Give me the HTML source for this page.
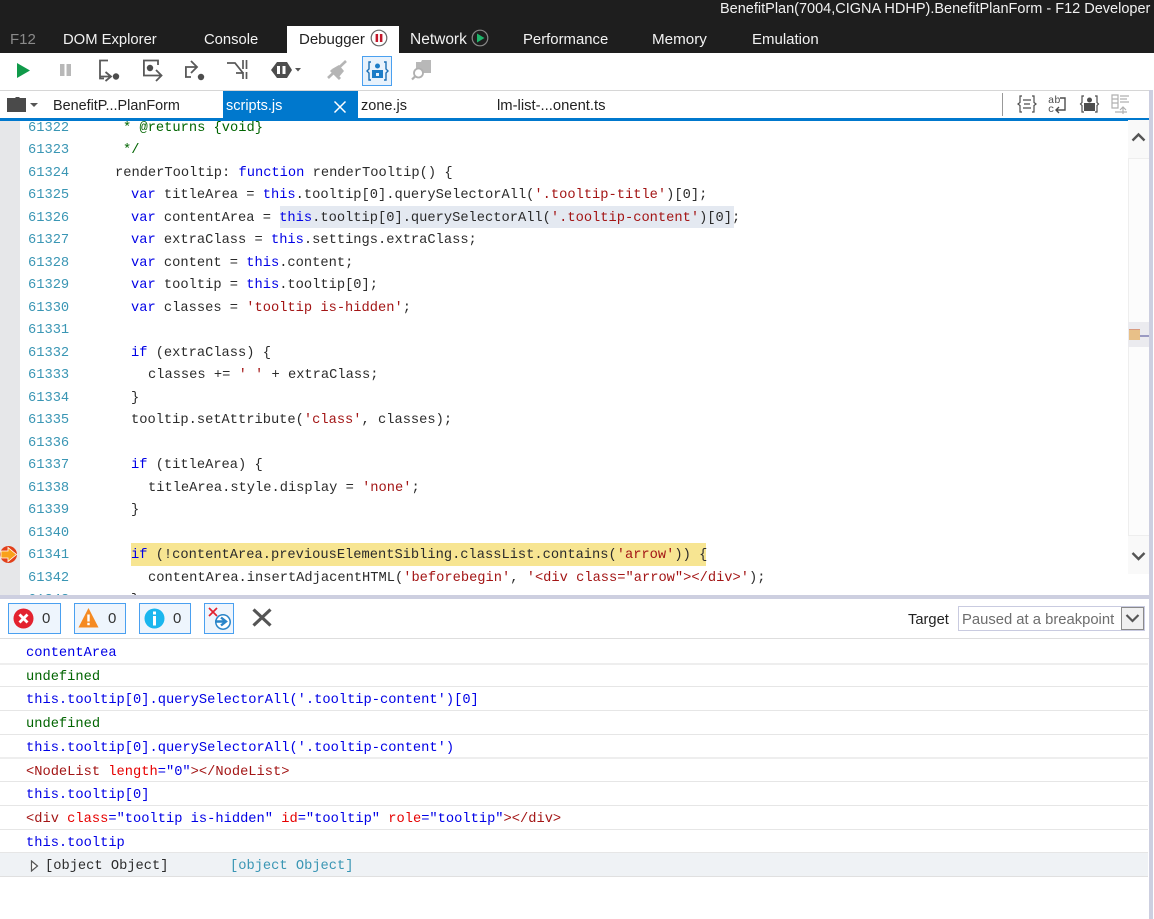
<!DOCTYPE html>
<html><head><meta charset="utf-8"><style>
html,body{margin:0;padding:0;background:#fff;}
#p{position:relative;width:1154px;height:919px;overflow:hidden;background:#fff;font-family:"Liberation Sans",sans-serif;font-size:15px;color:#222;}
#p div,#p svg{position:absolute;}
.t{white-space:pre;line-height:20px;}
.c{white-space:pre;font-family:"Liberation Mono",monospace;font-size:13.73px;line-height:20px;color:#2b2b2b;}
.n{color:#3a96b4;left:28px;}
.k{color:#0000e6;}.s{color:#a31515;}.g{color:#006400;}
.sep{left:0;width:1148px;height:1px;background:#e6e6e6;}
.bt{background:#eef5fd;border:1px solid #4aa0f0;box-sizing:border-box;height:31px;top:603px;}
</style></head><body><div id="p">

<!-- gutter -->
<div style="left:0;top:121px;width:20px;height:474px;background:#e6e7e9"></div>

<!-- code highlights -->
<div style="left:280px;top:206px;width:454px;height:22px;background:#e4e9f1"></div>
<div style="left:131px;top:543px;width:575px;height:23px;background:#f7e592"></div>

<!-- code -->
<div class="c n" style="top:119px">61322</div><div class="c g" style="left:123px;top:119px">* @returns {void}</div>
<div class="c n" style="top:141px">61323</div><div class="c g" style="left:123px;top:141px">*/</div>
<div class="c n" style="top:164px">61324</div><div class="c" style="left:115px;top:164px">renderTooltip: <span class="k">function</span> renderTooltip() {</div>
<div class="c n" style="top:186px">61325</div><div class="c" style="left:131px;top:186px"><span class="k">var</span> titleArea = <span class="k">this</span>.tooltip[0].querySelectorAll(<span class="s">'.tooltip-title'</span>)[0];</div>
<div class="c n" style="top:209px">61326</div><div class="c" style="left:131px;top:209px"><span class="k">var</span> contentArea = <span class="k">this</span>.tooltip[0].querySelectorAll(<span class="s">'.tooltip-content'</span>)[0];</div>
<div class="c n" style="top:231px">61327</div><div class="c" style="left:131px;top:231px"><span class="k">var</span> extraClass = <span class="k">this</span>.settings.extraClass;</div>
<div class="c n" style="top:254px">61328</div><div class="c" style="left:131px;top:254px"><span class="k">var</span> content = <span class="k">this</span>.content;</div>
<div class="c n" style="top:276px">61329</div><div class="c" style="left:131px;top:276px"><span class="k">var</span> tooltip = <span class="k">this</span>.tooltip[0];</div>
<div class="c n" style="top:299px">61330</div><div class="c" style="left:131px;top:299px"><span class="k">var</span> classes = <span class="s">'tooltip is-hidden'</span>;</div>
<div class="c n" style="top:321px">61331</div>
<div class="c n" style="top:344px">61332</div><div class="c" style="left:131px;top:344px"><span class="k">if</span> (extraClass) {</div>
<div class="c n" style="top:366px">61333</div><div class="c" style="left:148px;top:366px">classes += <span class="s">' '</span> + extraClass;</div>
<div class="c n" style="top:389px">61334</div><div class="c" style="left:131px;top:389px">}</div>
<div class="c n" style="top:411px">61335</div><div class="c" style="left:131px;top:411px">tooltip.setAttribute(<span class="s">'class'</span>, classes);</div>
<div class="c n" style="top:434px">61336</div>
<div class="c n" style="top:456px">61337</div><div class="c" style="left:131px;top:456px"><span class="k">if</span> (titleArea) {</div>
<div class="c n" style="top:479px">61338</div><div class="c" style="left:148px;top:479px">titleArea.style.display = <span class="s">'none'</span>;</div>
<div class="c n" style="top:501px">61339</div><div class="c" style="left:131px;top:501px">}</div>
<div class="c n" style="top:524px">61340</div>
<div class="c n" style="top:546px">61341</div><div class="c" style="left:131px;top:546px"><span class="k">if</span> (!contentArea.previousElementSibling.classList.contains(<span class="s">'arrow'</span>)) {</div>
<div class="c n" style="top:569px">61342</div><div class="c" style="left:148px;top:569px">contentArea.insertAdjacentHTML(<span class="s">'beforebegin'</span>, <span class="s">'&lt;div class="arrow"&gt;&lt;/div&gt;'</span>);</div>
<div class="c n" style="top:591px">61343</div><div class="c" style="left:131px;top:591px">}</div>
<svg style="left:0;top:546px" width="18" height="17"><circle cx="8.500" cy="8.500" r="8.500" fill="#e2401a"/><path d="M1 5H8V1.500L16.500 8.500L8 15.500V12H1Z" fill="#f9a11b" stroke="#fff" stroke-width="0.800"/></svg>

<!-- top bars drawn over code -->
<div style="left:0;top:0;width:1154px;height:53px;background:#1e1e1e"></div>
<div style="left:0;top:53px;width:1154px;height:65px;background:#fff"></div>
<div class="t" style="left:720px;top:-1px;color:#f2f2f2;font-size:14.500px">BenefitPlan(7004,CIGNA HDHP).BenefitPlanForm - F12 Developer Tools</div>
<div style="left:287px;top:26px;width:112px;height:27px;background:#fff"></div>
<div class="t" style="left:10px;top:30px;color:#8a8a8a">F12</div>
<div class="t" style="left:63px;top:30px;color:#f2f2f2;font-size:14.800px">DOM Explorer</div>
<div class="t" style="left:204px;top:30px;color:#f2f2f2;font-size:14.800px">Console</div>
<div class="t" style="left:299px;top:30px;color:#222">Debugger</div>
<svg style="left:370px;top:29px" width="18" height="18"><circle cx="9" cy="9" r="7.800" fill="#fff" stroke="#666" stroke-width="1.200"/><rect x="5.600" y="5" width="2.500" height="8" fill="#c2182b"/><rect x="9.900" y="5" width="2.500" height="8" fill="#c2182b"/></svg>
<div class="t" style="left:410px;top:30px;color:#f2f2f2;font-size:15.500px">Network</div>
<svg style="left:471px;top:29px" width="18" height="18"><circle cx="9" cy="9" r="7.800" fill="none" stroke="#888" stroke-width="1.200"/><path d="M6 4.500L13.500 9L6 13.500Z" fill="#1fb56b"/></svg>
<div class="t" style="left:523px;top:30px;color:#f2f2f2;font-size:14.900px">Performance</div>
<div class="t" style="left:652px;top:30px;color:#f2f2f2;font-size:15.200px">Memory</div>
<div class="t" style="left:752px;top:30px;color:#f2f2f2;font-size:15px">Emulation</div>

<!-- debug toolbar icons -->
<svg style="left:0;top:53px" width="460" height="37" fill="none">
<path d="M17 10L30 17.500L17 25Z" fill="#109a4a"/>
<rect x="60" y="11" width="4.500" height="12" fill="#b8b8b8"/><rect x="66.500" y="11" width="4.500" height="12" fill="#b8b8b8"/>
<g stroke="#595959" stroke-width="1.800">
<path d="M108 7.500H100V25.500H104"/><path d="M100 23.500H111M105.500 19L111 23.500L105.500 28"/>
<path d="M158 12V7.500H143.900V22.500H161M156 17L161.500 22.500L156 28"/>
<path d="M196 14H185.900V24H191M191 8L197 14L191 20"/>
<path d="M227 10H235L243 20M236 20H243"/><path d="M243 7V16M246.500 7V16M243 19V26M246.500 19V26" stroke-width="1.700"/>
</g>
<circle cx="116" cy="23.500" r="3.200" fill="#4d4d4d"/>
<circle cx="150" cy="15" r="3.200" fill="#4d4d4d"/>
<circle cx="201" cy="24" r="3.200" fill="#4d4d4d"/>
<path d="M277 9H287L292 17L287 25H277L271 17Z" fill="#4d4d4d"/>
<rect x="277" y="13" width="3" height="8" fill="#fff"/><rect x="282.500" y="13" width="3" height="8" fill="#fff"/>
<path d="M295 15H301L298 18.500Z" fill="#555"/>
<path d="M328 25L346 8" stroke="#b5b5b5" stroke-width="2.600"/><path d="M332 16L339 12L344 18L339 24Z" fill="#b5b5b5"/><path d="M331 17L340 26" stroke="#b5b5b5" stroke-width="3"/>
<rect x="362.500" y="3.500" width="29" height="29" fill="#e8f2fc" stroke="#4aa0f0"/>
<path d="M371 9H369V16L367 18L369 20V27H371M384 9H386V16L388 18L386 20V27H384" stroke="#1c6fb5" stroke-width="1.400"/>
<circle cx="377.500" cy="13" r="2.500" fill="#1c7cc7"/><path d="M372 17H383V25H372Z" fill="#1c7cc7"/><rect x="376" y="20" width="3" height="3" fill="#e8f2fc"/>
<path d="M416 9V20H431V7H422L421 9Z" fill="#b8b8b8"/><circle cx="418.500" cy="20" r="4.500" fill="#fff" stroke="#b0b0b0" stroke-width="1.800"/><path d="M415 23.500L412 26.500" stroke="#b0b0b0" stroke-width="2.200"/>
</svg>

<!-- file tabs -->
<div style="left:0;top:90px;width:1149px;height:1px;background:#d6d6d6"></div>
<svg style="left:6px;top:95px" width="36" height="18"><path d="M1 3H9L10 2H13L14 3H20V17H1Z" fill="#4a4a4a"/><path d="M24 8H32L28 12Z" fill="#555"/></svg>
<div class="t" style="left:53px;top:96px;color:#222;font-size:14.400px">BenefitP...PlanForm</div>
<div style="left:223px;top:91px;width:135px;height:28px;background:#0078cd"></div>
<div class="t" style="left:226px;top:96px;color:#fff;font-size:14.500px">scripts.js</div>
<svg style="left:333px;top:100px" width="14" height="14"><path d="M1.500 1.500L12.500 12.500M12.500 1.500L1.500 12.500" stroke="#fff" stroke-width="1.500"/></svg>
<div class="t" style="left:361px;top:96px;color:#222;font-size:14.500px">zone.js</div>
<div class="t" style="left:497px;top:96px;color:#222;font-size:14.800px">lm-list-...onent.ts</div>
<div style="left:1002px;top:93px;width:1px;height:23px;background:#999"></div>
<svg style="left:1015px;top:92px" width="122" height="24" fill="none" stroke="#4d4d4d" stroke-width="1.200">
<path d="M7 4H5V10.500L3 12L5 13.500V20H7M17 4H19V10.500L21 12L19 13.500V20H17M8 8H16M9 12H15M8 16H16"/>
<text x="33" y="11" font-family="Liberation Mono,monospace" font-size="10.500" fill="#4d4d4d" stroke="none">ab</text>
<text x="33" y="20" font-family="Liberation Mono,monospace" font-size="10.500" fill="#4d4d4d" stroke="none">c</text>
<path d="M45 6H50V18H41M44 15L41 18L44 21" stroke-width="1.400"/>
<path d="M69 4H67V10.500L65.500 12L67 13.500V20H69M80 4H82V10.500L83.500 12L82 13.500V20H80"/>
<circle cx="74.500" cy="8" r="2.500" fill="#4d4d4d" stroke="none"/><rect x="69" y="11" width="11" height="8" fill="#4d4d4d" stroke="none"/>
<path d="M97 3H103V16H97ZM97 7H103M97 11H103M105 4H114M105 7H112M105 10H114M100 20H112M108 22V15M105 18L108 15L111 18" stroke="#b0b0b0"/>
</svg>
<div style="left:0;top:118px;width:1149px;height:3px;background:#0078cd"></div>

<!-- scrollbar -->
<div style="left:1128px;top:120px;width:21px;height:454px;background:#f9f9f9"></div>
<div style="left:1128px;top:158px;width:21px;height:378px;background:#fcfcfc;border-top:1px solid #eee;border-bottom:1px solid #eee;border-left:1px solid #eee;box-sizing:border-box"></div>
<svg style="left:1128px;top:130px" width="21" height="16"><path d="M4.500 10.500L10.500 4.500L16.500 10.500" fill="none" stroke="#555" stroke-width="2.400"/></svg>
<svg style="left:1128px;top:548px" width="21" height="16"><path d="M4.500 5L10.500 11L16.500 5" fill="none" stroke="#555" stroke-width="2.400"/></svg>
<div style="left:1128px;top:322px;width:21px;height:25px;background:#ebebef"></div>
<div style="left:1129px;top:329px;width:11px;height:11px;background:#e8c088;border-top:1px solid #d89a80;box-sizing:border-box"></div>
<div style="left:1140px;top:335px;width:9px;height:2px;background:#9a9ac2"></div>
<div style="left:1149px;top:90px;width:4px;height:829px;background:#cdcfe0"></div>
<div style="left:1153px;top:90px;width:1px;height:829px;background:#fff"></div>

<!-- console area background + splitter -->
<div style="left:0;top:599px;width:1149px;height:320px;background:#fff"></div>
<div style="left:0;top:595px;width:1149px;height:4px;background:#cdcfe0"></div>

<!-- console toolbar -->
<div class="bt" style="left:8px;width:53px"></div>
<svg style="left:13px;top:608px" width="21" height="21"><circle cx="10.500" cy="10.500" r="10" fill="#e3222f"/><path d="M6.500 6.500L14.500 14.500M14.500 6.500L6.500 14.500" stroke="#fff" stroke-width="2.800"/></svg>
<div class="t" style="left:42px;top:609px;color:#333;font-size:15px">0</div>
<div class="bt" style="left:74px;width:52px"></div>
<svg style="left:78px;top:607px" width="21" height="21"><path d="M10.500 1L20.500 20.500H0.500Z" fill="#f58a22"/><rect x="9.300" y="7.500" width="2.400" height="7" fill="#fff"/><rect x="9.300" y="15.800" width="2.400" height="2.400" fill="#fff"/></svg>
<div class="t" style="left:108px;top:609px;color:#333;font-size:15px">0</div>
<div class="bt" style="left:139px;width:52px"></div>
<svg style="left:144px;top:608px" width="21" height="21"><circle cx="10.500" cy="10.500" r="10" fill="#1ab6ee"/><rect x="9" y="3.500" width="3" height="3" fill="#fff"/><rect x="9" y="8" width="3" height="9.500" fill="#fff"/></svg>
<div class="t" style="left:173px;top:609px;color:#333;font-size:15px">0</div>
<div class="bt" style="left:204px;width:30px"></div>
<svg style="left:208px;top:606px" width="24" height="26"><path d="M1 2L9 10M9 2L1 10" stroke="#e3222f" stroke-width="1.700"/><circle cx="15" cy="16" r="7.200" fill="#fff" stroke="#2a85c8" stroke-width="1.500"/><path d="M7 15.500H17M13 11.500L18 15.500L13 19.500" fill="none" stroke="#2a85c8" stroke-width="2.400"/></svg>
<svg style="left:251px;top:607px" width="22" height="21"><path d="M2.500 2.500L19.500 18.500M19.500 2.500L2.500 18.500" stroke="#555" stroke-width="3.200"/></svg>
<div class="t" style="left:908px;top:610px;color:#222;font-size:14.700px">Target</div>
<div style="left:958px;top:606px;width:187px;height:25px;box-sizing:border-box;border:1px solid #c9cbe0;background:#fff"></div>
<div class="t" style="left:962px;top:610px;color:#6d6d6d;font-size:14.800px">Paused at a breakpoint</div>
<div style="left:1121px;top:607px;width:23px;height:23px;box-sizing:border-box;border:1px solid #8a8a8a;background:#f0f0f0"></div>
<svg style="left:1121px;top:607px" width="23" height="23"><path d="M5.500 8L11.500 14L17.500 8" fill="none" stroke="#555" stroke-width="2.200"/></svg>
<div style="left:0;top:638px;width:1149px;height:1px;background:#dedede"></div>

<!-- console rows -->
<div style="left:0;top:853px;width:1148px;height:23px;background:#eff2f5"></div>
<div class="sep" style="top:663px;height:2px;background:#eee"></div>
<div class="sep" style="top:686px"></div><div class="sep" style="top:710px"></div><div class="sep" style="top:734px"></div>
<div class="sep" style="top:757px;height:2px;background:#eee"></div>
<div class="sep" style="top:781px"></div><div class="sep" style="top:805px"></div><div class="sep" style="top:829px"></div>
<div class="sep" style="top:852px"></div><div class="sep" style="top:876px;background:#e0e0e0"></div>
<div class="c k" style="left:26px;top:644px">contentArea</div>
<div class="c" style="left:26px;top:668px;color:#006400">undefined</div>
<div class="c k" style="left:26px;top:691px">this.tooltip[0].querySelectorAll('.tooltip-content')[0]</div>
<div class="c" style="left:26px;top:715px;color:#006400">undefined</div>
<div class="c k" style="left:26px;top:739px">this.tooltip[0].querySelectorAll('.tooltip-content')</div>
<div class="c k" style="left:26px;top:763px"><span class="s">&lt;NodeList</span> <span style="color:#e60000">length</span>="0"<span class="s">&gt;&lt;/NodeList&gt;</span></div>
<div class="c k" style="left:26px;top:786px">this.tooltip[0]</div>
<div class="c k" style="left:26px;top:810px"><span class="s">&lt;div</span> <span style="color:#e60000">class</span>="tooltip is-hidden" <span style="color:#e60000">id</span>="tooltip" <span style="color:#e60000">role</span>="tooltip"<span class="s">&gt;&lt;/div&gt;</span></div>
<div class="c k" style="left:26px;top:834px">this.tooltip</div>
<svg style="left:30px;top:860px" width="9" height="12"><path d="M1.500 1L7.500 6L1.500 11Z" fill="#fff" stroke="#555" stroke-width="1.200"/></svg>
<div class="c" style="left:45px;top:857px">[object Object]</div>
<div class="c" style="left:230px;top:857px;color:#3a96b4">[object Object]</div>
</div></body></html>
